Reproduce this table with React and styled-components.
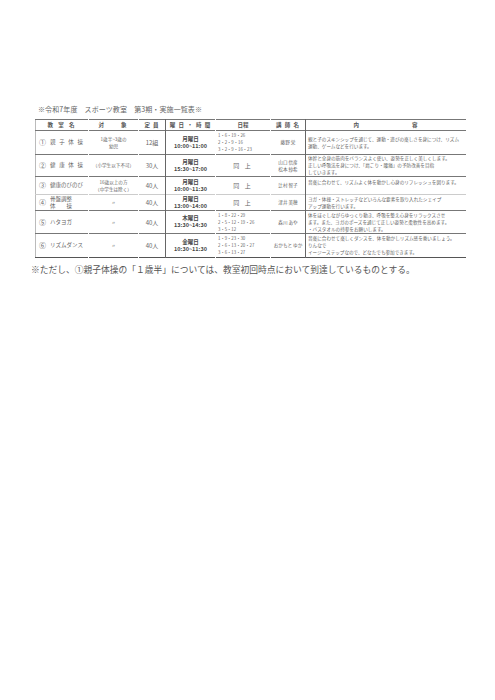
import React from 'react';
import styled, { createGlobalStyle } from 'styled-components';

const GlobalStyle = createGlobalStyle`
  html, body {
    margin: 0;
    padding: 0;
    background: #ffffff;
  }
  body {
    font-family: "Noto Sans CJK JP", "Noto Sans", sans-serif;
    color: #555;
  }
`;

const Page = styled.div`
  width: 495px;
  height: 700px;
  padding-top: 105px;
  box-sizing: border-box;
`;

const Title = styled.div`
  margin-left: 38px;
  font-size: 7px;
  line-height: 9px;
  color: #666;
  letter-spacing: 0.1px;
  white-space: pre;
`;

const Table = styled.table`
  margin: 5px 0 0 35px;
  width: 431px;
  border-collapse: collapse;
  table-layout: fixed;
  border-top: 1px solid #444;
  border-bottom: 1px solid #555;
  border-left: 1px solid #bbb;
  border-right: 1px solid #444;
`;

const Row = styled.tr`
  height: ${(p) => p.h}px;
  border-top: 1px solid ${(p) => (p.faint ? '#ccc' : '#777')};
`;

const Cell = styled.td`
  padding: 0 ${(p) => (p.pad ? 2 : 0)}px;
  vertical-align: middle;
  text-align: ${(p) => p.align || 'center'};
  font-size: ${(p) => p.size || 4.6}px;
  line-height: ${(p) => p.lh || 7}px;
  font-weight: ${(p) => (p.bold ? 700 : 400)};
  color: ${(p) => (p.dark ? '#444' : '#666')};
  white-space: nowrap;
  overflow: hidden;
  border-right: 1px solid ${(p) => (p.line ? '#666' : 'transparent')};
  letter-spacing: ${(p) => p.ls || 0}px;
`;

const Head = styled(Cell)`
  font-weight: 700;
  font-size: 5.5px;
  color: #555;
`;

const Num = styled.span`
  display: inline-block;
  width: 11px;
  padding-left: 3px;
  font-size: 7px;
  vertical-align: middle;
`;

const Name = styled.span`
  display: inline-block;
  vertical-align: middle;
  font-size: 5.5px;
  line-height: 7px;
  letter-spacing: ${(p) => p.ls || 0}px;
`;

const Note = styled.div`
  margin: 6px 0 0 31px;
  font-size: 8.75px;
  line-height: 11px;
  color: #555;
  white-space: nowrap;
`;

const rows = [
  {
    n: '①', name: ['親 子 体 操'], ls: 1.2, target: ['1歳半~3歳の', '幼児'], cap: '12組',
    day: '月曜日', time: '10:00~11:00',
    dates: ['1・6・19・26', '2・2・9・16', '3・2・9・16・23'],
    teacher: ['藤野 栄'],
    text: ['親と子のスキンシップを通じて、運動・遊びの楽しさを身につけ、リズム', '運動、ゲームなどを行います。'],
    h: 24,
  },
  {
    n: '②', name: ['健 康 体 操'], ls: 1.2, target: ['（小学生以下不可）'], cap: '30人',
    day: '月曜日', time: '15:30~17:00', same: true,
    teacher: ['山口 信彦', '松本 紗希'],
    text: ['体幹と全身の筋肉をバランスよく使い、姿勢を正しく美しくします。', '正しい呼吸法を身につけ、「肩こり・腰痛」の予防改善を目指', 'していきます。'],
    h: 18,
  },
  {
    n: '③', name: ['健康のびのび'], target: ['16歳以上の方', '（中学生は除く）'], cap: '40人',
    day: '月曜日', time: '10:00~11:30', same: true,
    teacher: ['辻村 智子'],
    text: ['音楽に合わせて、リズムよく体を動かし心身のリフレッシュを図ります。', ''],
    h: 18,
  },
  {
    n: '④', name: ['骨盤調整', '体　　操'], target: ['〃'], cap: '40人',
    day: '月曜日', time: '13:00~14:00', same: true,
    teacher: ['津井 美穂'],
    text: ['ヨガ・体操・ストレッチなどいろんな要素を取り入れたシェイプ', 'アップ運動を行います。'],
    h: 16, faint: true,
  },
  {
    n: '⑤', name: ['ハタヨガ'], target: ['〃'], cap: '40人',
    day: '木曜日', time: '13:30~14:30',
    dates: ['1・8・22・29', '2・5・12・19・26', '3・5・12'],
    teacher: ['森川 あや'],
    text: ['体をほぐしながらゆっくり動き、呼吸を整え心身をリラックスさせ', 'ます。また、ヨガのポーズを通じて正しい姿勢と柔軟性を高めます。', '・バスタオルの持参をお願いします。'],
    h: 23,
  },
  {
    n: '⑥', name: ['リズムダンス'], target: ['〃'], cap: '40人',
    day: '金曜日', time: '10:30~11:30',
    dates: ['1・9・23・30', '2・6・13・20・27', '3・6・13・27'],
    teacher: ['おかもと ゆか'],
    text: ['音楽に合わせて楽しくダンスを、体を動かしリズム感を養いましょう。', 'りんなで', 'イージーステップなので、どなたでも参加できます。'],
    h: 24,
  },
];

const Lines = ({ items }) => (
  <>
    {items.map((t, i) => (
      <div key={i}>{t || '\u00a0'}</div>
    ))}
  </>
);

export default function App() {
  return (
    <Page>
      <GlobalStyle />
      <Title>{'※令和7年度　スポーツ教室　第3期・実施一覧表※'}</Title>
      <Table>
        <colgroup>
          <col style={{ width: 53 }} />
          <col style={{ width: 50 }} />
          <col style={{ width: 27 }} />
          <col style={{ width: 50 }} />
          <col style={{ width: 55 }} />
          <col style={{ width: 35 }} />
          <col style={{ width: 161 }} />
        </colgroup>
        <tbody>
          <Row h={11}>
            <Head ls={2}>教 室 名</Head>
            <Head ls={2}>対　　象</Head>
            <Head ls={1} line>定 員</Head>
            <Head ls={1}>曜 日 ・ 時 間</Head>
            <Head>日程</Head>
            <Head ls={1} line>講 師 名</Head>
            <Head ls={1}>内　　　　　　　　容</Head>
          </Row>
          {rows.map((r, i) => (
            <Row key={i} h={r.h} faint={r.faint}>
              <Cell align="left">
                <Num>{r.n}</Num>
                <Name ls={r.ls}>
                  <Lines items={r.name} />
                </Name>
              </Cell>
              <Cell>
                <Lines items={r.target} />
              </Cell>
              <Cell size={6} line>{r.cap}</Cell>
              <Cell size={5.5} bold dark lh={7}>
                <div>{r.day}</div>
                <div>{r.time}</div>
              </Cell>
              {r.same ? (
                <Cell size={6} ls={2}>同 上</Cell>
              ) : (
                <Cell align="left" pad size={4.3}>
                  <Lines items={r.dates} />
                </Cell>
              )}
              <Cell size={4.6} line>
                <Lines items={r.teacher} />
              </Cell>
              <Cell align="left" pad>
                <Lines items={r.text} />
              </Cell>
            </Row>
          ))}
        </tbody>
      </Table>
      <Note>※ただし、①親子体操の「１歳半」については、教室初回時点において到達しているものとする。</Note>
    </Page>
  );
}
